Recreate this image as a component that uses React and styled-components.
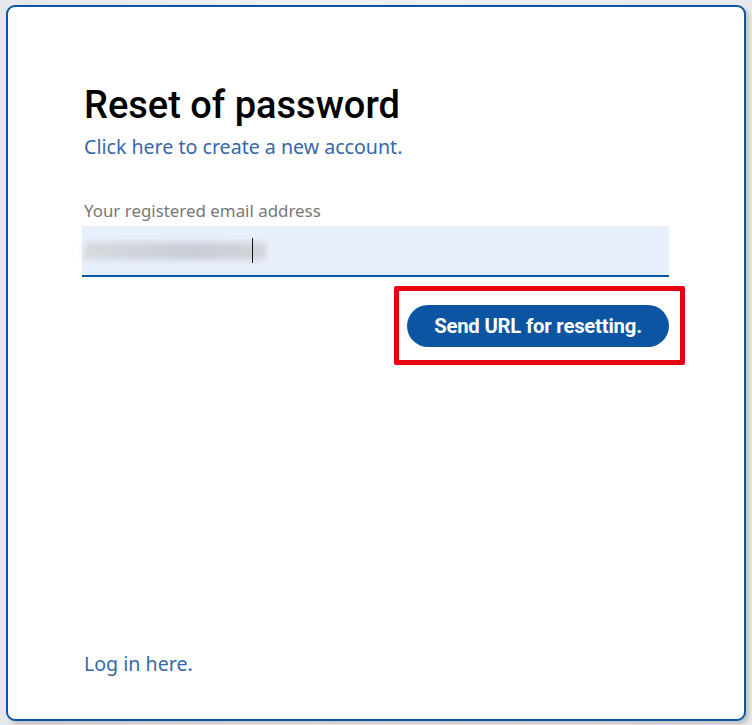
import React from "react";
import styled, { createGlobalStyle } from "styled-components";

const Global = createGlobalStyle`
  html, body { margin: 0; padding: 0; }
  body { background: #e9eaec; font-family: Roboto, "Noto Sans", sans-serif; }
`;

const Page = styled.div`
  width: 752px;
  height: 725px;
  box-sizing: border-box;
  padding: 5px 6px 4px 6px;
  background: linear-gradient(90deg, #e6e7ea 0%, #f0f1f3 40%, #e8e9ec 100%);
`;

const Card = styled.div`
  box-sizing: border-box;
  height: 100%;
  background: #fff;
  border: 2px solid #0b56a4;
  border-radius: 9px;
  box-shadow: 3px 3px 4px rgba(0, 0, 0, 0.18);
  padding: 75px 76px 42px 76px;
  display: flex;
  flex-direction: column;
`;

const Title = styled.h1`
  margin: 0;
  font-family: Roboto, sans-serif;
  font-weight: 500;
  font-size: 38px;
  line-height: 46px;
  color: #000;
`;

const TextLink = styled.a`
  font-family: "Noto Sans", sans-serif;
  font-size: 19.6px;
  line-height: 26px;
  color: #3568aa;
  text-decoration: none;
  margin-top: ${(p) => p.$mt || 0}px;
`;

const Label = styled.div`
  margin-top: 40px;
  font-family: "Noto Sans", sans-serif;
  font-size: 16.9px;
  line-height: 22px;
  color: #777;
`;

const InputBox = styled.div`
  margin-top: 4px;
  margin-left: -2px;
  width: 587px;
  height: 49px;
  background: #e8f0fd;
  border-bottom: 2px solid #0b56a4;
  display: flex;
  align-items: center;
  position: relative;
`;

const Blurred = styled.span`
  display: block;
  width: 182px;
  height: 18px;
  margin-left: 2px;
  background: linear-gradient(90deg, #d6d9de, #c9ccd4 60%, #d2d4da);
  filter: blur(3px);
`;

const Caret = styled.span`
  position: absolute;
  left: 170px;
  top: 12px;
  width: 1px;
  height: 25px;
  background: #111;
`;

const Actions = styled.div`
  display: flex;
  justify-content: flex-end;
  margin-top: 9px;
  margin-right: -17px;
`;

const Highlight = styled.div`
  border: 5px solid #e60012;
  border-radius: 2px;
  padding: 14px 11px 13px 8px;
`;

const Button = styled.button`
  width: 262px;
  height: 42px;
  border: none;
  border-radius: 21px;
  background: #0b55a3;
  color: #fff;
  font-family: Roboto, sans-serif;
  font-weight: 700;
  font-size: 20.3px;
  letter-spacing: -0.2px;
  cursor: pointer;
`;

const Spacer = styled.div`
  flex: 1;
`;

export default function App() {
  return (
    <>
      <Global />
      <Page>
        <Card>
          <Title>Reset of password</Title>
          <TextLink href="#" $mt={6}>Click here to create a new account.</TextLink>
          <Label>Your registered email address</Label>
          <InputBox>
            <Blurred />
            <Caret />
          </InputBox>
          <Actions>
            <Highlight>
              <Button>Send URL for resetting.</Button>
            </Highlight>
          </Actions>
          <Spacer />
          <TextLink href="#">Log in here.</TextLink>
        </Card>
      </Page>
    </>
  );
}
